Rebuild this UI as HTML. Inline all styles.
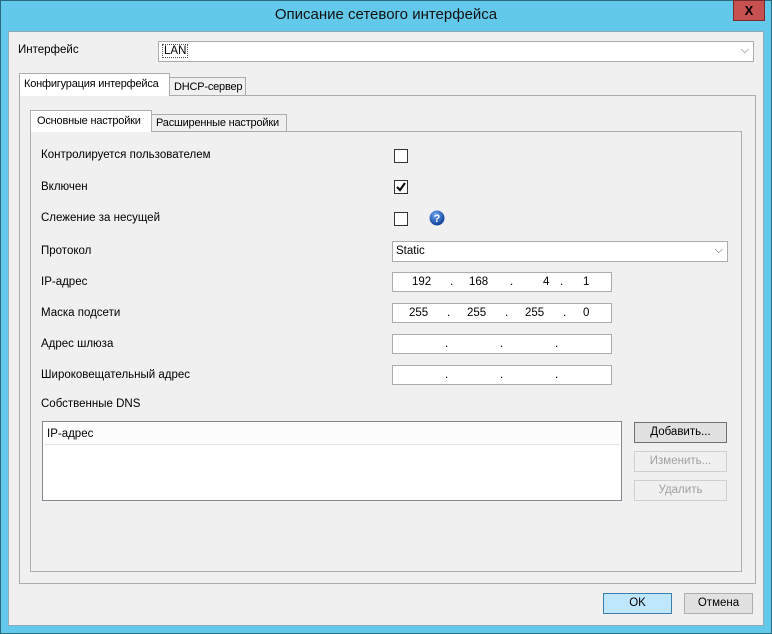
<!DOCTYPE html>
<html><head><meta charset="utf-8"><style>
*{box-sizing:border-box;margin:0;padding:0}
body{width:772px;height:634px;position:relative;background:#63c9ea;font-family:"Liberation Sans",sans-serif;font-size:11.5px;color:#000;overflow:hidden}
.a{position:absolute;white-space:nowrap}
.client{left:8px;top:31px;width:756px;height:595px;background:#f0f0f0;border:1px solid #8ea9b8}
.lbl{position:absolute;left:41px;line-height:14px;white-space:nowrap}
.box{position:absolute;background:#fff;border:1px solid #acacac;white-space:nowrap}
.cb{position:absolute;left:394px;width:14px;height:14px;border:1px solid #333;background:#fff}
.ip{left:392px;width:220px;height:20px}
.ip span{position:absolute;top:3px}
.btn{position:absolute;background:#e1e1e1;border:1px solid #adadad;text-align:center;line-height:18px;white-space:nowrap}
.dis{color:#a0a0a0;border-color:#d0d0d0;background:#f0f0f0}
.tab{font-size:11px;letter-spacing:-0.2px;overflow:hidden}
</style></head><body>
<div class="a" style="left:0;top:0;width:772px;height:634px;border:1px solid #2b6b80"></div>
<div class="a" style="left:0;top:6px;width:772px;text-align:center;font-size:15px;color:#111">Описание сетевого интерфейса</div>
<div class="a" style="left:733px;top:0;width:32px;height:21px;background:#c75050;border:1px solid #7a2a2a;color:#000;font-weight:bold;text-align:center;line-height:19px;font-size:13px">X</div>
<div class="a client"></div>
<div class="a" style="left:18px;top:44px">Интерфейс</div>
<div class="box" style="left:158px;top:41px;width:596px;height:21px"><span class="a" style="left:3px;top:2px;border:1px dotted #555;padding:0 1px;line-height:12px">LAN</span><span class="a" style="right:4px;top:2px;color:#666;font-size:11px">⌵</span></div>
<div class="a" style="left:19px;top:95px;width:737px;height:489px;border:1px solid #adadad;background:#f0f0f0"></div>
<div class="a tab" style="left:169px;top:77px;width:77px;height:19px;border:1px solid #adadad;background:#f0f0f0;padding:3px 4px">DHCP-сервер</div>
<div class="a tab" style="left:19px;top:73px;width:151px;height:23px;border:1px solid #adadad;border-bottom:none;background:#fff;padding:4px 4px">Конфигурация интерфейса</div>
<div class="a" style="left:30px;top:131px;width:712px;height:441px;border:1px solid #adadad;background:#f0f0f0"></div>
<div class="a tab" style="left:151px;top:114px;width:136px;height:18px;border:1px solid #adadad;background:#f0f0f0;padding:2px 4px">Расширенные настройки</div>
<div class="a tab" style="left:30px;top:110px;width:122px;height:22px;border:1px solid #adadad;border-bottom:none;background:#fff;padding:4px 6px">Основные настройки</div>
<div class="lbl" style="top:148px">Контролируется пользователем</div>
<div class="lbl" style="top:180px">Включен</div>
<div class="lbl" style="top:211px">Слежение за несущей</div>
<div class="lbl" style="top:244px">Протокол</div>
<div class="lbl" style="top:275px">IP-адрес</div>
<div class="lbl" style="top:306px">Маска подсети</div>
<div class="lbl" style="top:337px">Адрес шлюза</div>
<div class="lbl" style="top:368px">Широковещательный адрес</div>
<div class="lbl" style="top:397px">Собственные DNS</div>
<div class="cb" style="top:149px"></div>
<div class="cb" style="top:180px"><svg width="12" height="12" style="position:absolute;left:0;top:0"><path d="M2 6 L5 9 L10 2" stroke="#111" stroke-width="2.2" fill="none"/></svg></div>
<div class="cb" style="top:212px"></div>
<svg class="a" style="left:429px;top:210px" width="16" height="16"><defs><radialGradient id="g" cx="40%" cy="30%" r="70%"><stop offset="0" stop-color="#6fa8ef"/><stop offset="1" stop-color="#0d3f9a"/></radialGradient></defs><circle cx="8" cy="8" r="7.5" fill="url(#g)"/><text x="8" y="12" text-anchor="middle" font-size="11" font-weight="bold" fill="#fff" font-family="Liberation Sans">?</text></svg>
<div class="box" style="left:392px;top:241px;width:336px;height:21px"><span class="a" style="left:3px;top:3px">Static</span><span class="a" style="right:4px;top:2px;color:#555;font-size:11px">⌵</span></div>
<div class="box ip" style="top:272px"><span style="left:19px">192</span><span style="left:57px">.</span><span style="left:76px">168</span><span style="left:117px">.</span><span style="left:150px">4</span><span style="left:167px">.</span><span style="left:190px">1</span></div>
<div class="box ip" style="top:303px"><span style="left:16px">255</span><span style="left:54px">.</span><span style="left:74px">255</span><span style="left:112px">.</span><span style="left:132px">255</span><span style="left:170px">.</span><span style="left:190px">0</span></div>
<div class="box ip" style="top:334px"><span style="left:52px">.</span><span style="left:107px">.</span><span style="left:162px">.</span></div>
<div class="box ip" style="top:365px"><span style="left:52px">.</span><span style="left:107px">.</span><span style="left:162px">.</span></div>
<div class="box" style="left:42px;top:421px;width:580px;height:80px;border-color:#828790"><div style="margin:1px;height:22px;background:#fcfcfc;border-bottom:1px solid #e5e5e5;padding:5px 3px">IP-адрес</div></div>
<div class="btn" style="left:634px;top:422px;width:93px;height:21px;border-color:#707070">Добавить...</div>
<div class="btn dis" style="left:634px;top:451px;width:93px;height:21px">Изменить...</div>
<div class="btn dis" style="left:634px;top:480px;width:93px;height:21px">Удалить</div>
<div class="btn" style="left:603px;top:593px;width:69px;height:21px;background:#bee6fd;border-color:#3c7fb1">OK</div>
<div class="btn" style="left:684px;top:593px;width:69px;height:21px">Отмена</div>
</body></html>
